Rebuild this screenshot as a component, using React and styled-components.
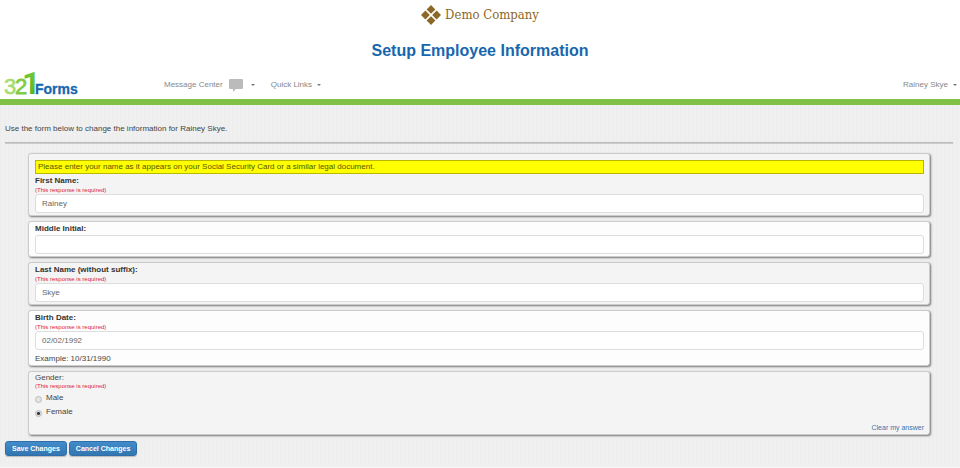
import React, { useState } from "react";
import styled, { createGlobalStyle } from "styled-components";

const GlobalStyle = createGlobalStyle`
  * {
    box-sizing: border-box;
  }
  body {
    margin: 0;
    background: #fff;
    color: #444;
    font-family: "Liberation Sans", Arial, sans-serif;
    font-size: 8px;
    line-height: 12px;
  }
`;

const Brand = styled.div`
  display: flex;
  align-items: center;
  justify-content: center;
  height: 30px;
  gap: 4px;
  color: #8c6828;
  font-family: "DejaVu Serif Condensed", "DejaVu Serif", serif;
  font-size: 13px;
  svg {
    width: 20px;
    height: 20px;
  }
`;

const Title = styled.h1`
  margin: 11px 0 0;
  color: #1767ae;
  font-size: 16px;
  line-height: 20px;
  text-align: center;
`;

const NavBar = styled.nav`
  display: flex;
  align-items: center;
  height: 44px;
  padding: 8px 3px 0 4px;
  border-bottom: 6px solid #80c044;
`;

const Logo = styled.svg`
  width: 76px;
  height: 28px;
  margin-right: 84px;
  overflow: visible;
  font-family: "Liberation Sans", Arial, sans-serif;
`;

const NavButton = styled.button`
  display: flex;
  align-items: center;
  gap: 5px;
  padding: 2px 0 0;
  border: 0;
  margin-right: 16px;
  margin-left: ${(props) => (props.$right ? "auto" : "0")};
  background: none;
  color: #888;
  font: inherit;
  svg {
    margin: 0 3px 0 1px;
  }
  &:last-child {
    margin-right: 0;
  }
`;

const Caret = styled.span`
  border: 2px solid transparent;
  border-top-color: #777;
  border-bottom: 0;
`;

const Main = styled.main`
  padding: 18px 5px 11px;
  border-bottom: 1px solid #f7f7f7;
  background: repeating-linear-gradient(90deg, #eee 0 2px, #f0f0f0 2px 4px);
`;

const Intro = styled.p`
  margin: 0 0 7px;
`;

const Rule = styled.hr`
  height: 2px;
  margin: 0 2px 9px 0;
  border: 0;
  border-top: 1px solid #bbb;
  background: #ccc;
`;

const Card = styled.section`
  margin: 0 25px 5px 23px;
  padding: 1px 5px 2px 6px;
  border: 1px solid #ccc;
  border-radius: 3px;
  background: ${(props) => (props.$white ? "#fdfdfd" : "#f4f4f4")};
  box-shadow: 1px 1px 2px #777;
`;

const Notice = styled.p`
  margin: 5px 0 1px;
  padding: 0 2px;
  border: 1px solid #b8b800;
  background: #ff0;
  color: #555500;
`;

const Label = styled.label`
  display: block;
  color: #333;
  font-weight: bold;
`;

const Required = styled.div`
  color: #d9233f;
  font-size: 6px;
  line-height: 7px;
`;

const TextBox = styled.input`
  display: block;
  width: 100%;
  height: 19px;
  padding: 0 6px;
  border: 1px solid #ddd;
  border-radius: 3px;
  background: #fff;
  color: #666;
  font: inherit;
`;

const Hint = styled.p`
  margin: 4px 0 0;
  line-height: 9px;
`;

const Group = styled.fieldset`
  margin: 0;
  padding: 0;
  border: 0;
  legend {
    padding: 0;
    line-height: 10px;
  }
  ${Required} {
    margin-bottom: 1px;
  }
`;

const Choice = styled.label`
  display: flex;
  align-items: center;
  gap: 4px;
  height: 14px;
`;

const Radio = styled.input`
  appearance: none;
  width: 7px;
  height: 7px;
  margin: 3px 0 0;
  border: 1px solid #bbb;
  border-radius: 50%;
  background: #e4e4e4;
  &:checked {
    background: radial-gradient(#333 0 1px, #ddd 2px);
  }
`;

const Clear = styled.div`
  margin-top: 5px;
  font-size: 7px;
  line-height: 8px;
  text-align: right;
  a {
    color: #3b73ab;
    text-decoration: none;
  }
`;

const Actions = styled.div`
  display: flex;
  gap: 2px;
  margin-top: 6px;
`;

const Button = styled.button`
  height: 15px;
  padding: 0 6px 1px;
  border: 1px solid #2f6ea8;
  border-radius: 3px;
  background: linear-gradient(#428bca, #3276b1);
  box-shadow: 0 1px 1px #bbb;
  color: #fff;
  font: bold 7px "Liberation Sans", Arial, sans-serif;
`;

function Field(props) {
  const { id, label, required, notice, hint, white } = props;
  const [value, setValue] = useState(props.value);

  return (
    <Card $white={white}>
      {notice && <Notice>{notice}</Notice>}
      <Label htmlFor={id}>{label}</Label>
      {required && <Required>(This response is required)</Required>}
      <TextBox id={id} value={value} onChange={(e) => setValue(e.target.value)} />
      {hint && <Hint>{hint}</Hint>}
    </Card>
  );
}

function App() {
  const [gender, setGender] = useState("Female");

  return (
    <>
      <GlobalStyle />
      <header>
        <Brand>
          <svg viewBox="0 0 20 20" fill="currentColor">
            <path d="M10 0l4.4 4.4-4.4 4.4-4.4-4.4zM4.4 5.6l4.4 4.4-4.4 4.4L0 10zM15.6 5.6L20 10l-4.4 4.4-4.4-4.4zM10 11.2l4.4 4.4L10 20l-4.4-4.4z" />
          </svg>
          Demo Company
        </Brand>
        <Title>Setup Employee Information</Title>
        <NavBar>
          <Logo viewBox="0 0 76 28" aria-label="321Forms">
            <defs>
              <linearGradient id="leaf" x1="0" y1="0" x2="0" y2="1">
                <stop offset="0" stopColor="#7ad03a" />
                <stop offset="1" stopColor="#4bb020" />
              </linearGradient>
            </defs>
            <text x="0" y="24" fontSize="22" fill="#a5dc6e" stroke="#a5dc6e" strokeWidth="0.6">3</text>
            <text x="11" y="24" fontSize="22" fill="#7fcb45" stroke="#7fcb45" strokeWidth="0.8">2</text>
            <text x="18" y="24" fontSize="32" fontFamily="Roboto" fontWeight="bold" fill="url(#leaf)">1</text>
            <text x="31" y="24" fontSize="14" fontWeight="bold" fill="#1767ae" stroke="#1767ae" strokeWidth="0.3">Forms</text>
          </Logo>
          <NavButton>
            Message Center
            <svg width="14" height="13" viewBox="0 0 14 13" fill="#bbb">
              <path d="M1 0h12q1 0 1 1v8q0 1-1 1H7l-3 3v-3H1q-1 0-1-1V1q0-1 1-1z" />
            </svg>
            <Caret />
          </NavButton>
          <NavButton>
            Quick Links
            <Caret />
          </NavButton>
          <NavButton $right>
            Rainey Skye
            <Caret />
          </NavButton>
        </NavBar>
      </header>
      <Main>
        <Intro>Use the form below to change the information for Rainey Skye.</Intro>
        <Rule />
        <form onSubmit={(e) => e.preventDefault()}>
          <Field
            id="first"
            label="First Name:"
            value="Rainey"
            required
            notice="Please enter your name as it appears on your Social Security Card or a similar legal document."
          />
          <Field id="middle" label="Middle Initial:" value="" white />
          <Field id="last" label="Last Name (without suffix):" value="Skye" required />
          <Field id="birth" label="Birth Date:" value="02/02/1992" required white hint="Example: 10/31/1990" />
          <Card>
            <Group>
              <legend>Gender:</legend>
              <Required>(This response is required)</Required>
              {["Male", "Female"].map((i) => (
                <Choice key={i}>
                  <Radio type="radio" name="gender" checked={gender === i} onChange={() => setGender(i)} />
                  {i}
                </Choice>
              ))}
            </Group>
            <Clear>
              <a
                href="#clear"
                onClick={(e) => {
                  e.preventDefault();
                  setGender("");
                }}
              >
                Clear my answer
              </a>
            </Clear>
          </Card>
          <Actions>
            <Button>Save Changes</Button>
            <Button type="button">Cancel Changes</Button>
          </Actions>
        </form>
      </Main>
    </>
  );
}
export default App;
